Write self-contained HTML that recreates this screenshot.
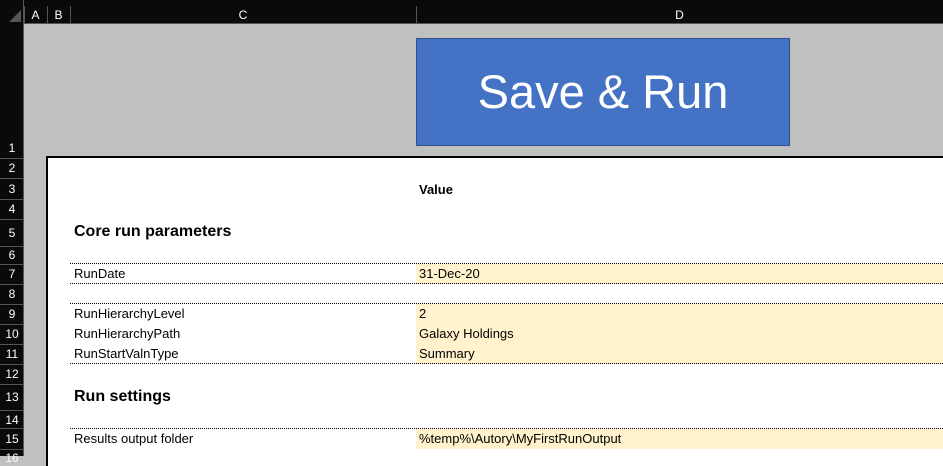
<!DOCTYPE html>
<html><head><style>
body{margin:0;width:943px;height:456px;overflow:hidden;background:#c0c0c0;font-family:"Liberation Sans",sans-serif;position:relative}
div{position:absolute;box-sizing:border-box}
.h{color:#fff;font-size:12px;text-align:center}
.s{left:0;width:24px;height:1px;background:#555}
.t{font-size:13px;color:#000;white-space:nowrap}
.dot{left:70px;width:873px;height:0;border-top:1px dotted #000}
.y{left:416px;width:527px;background:#fff2cc}
</style></head><body>
<div style="left:0;top:0;width:943px;height:24px;background:#0a0a0a;border-bottom:1px solid #555"></div>
<div style="left:0;top:0;width:24px;height:456px;background:#0a0a0a;border-right:1px solid #555"></div>
<div style="left:9px;top:10px;width:0;height:0;border-left:12px solid transparent;border-bottom:12px solid #555"></div>
<div style="left:24px;top:6px;width:1px;height:18px;background:#555"></div>
<div style="left:47px;top:6px;width:1px;height:18px;background:#555"></div>
<div style="left:70px;top:6px;width:1px;height:18px;background:#555"></div>
<div style="left:416px;top:6px;width:1px;height:18px;background:#555"></div>
<div class="h" style="left:24px;top:8px;width:23px">A</div>
<div class="h" style="left:47px;top:8px;width:23px">B</div>
<div class="h" style="left:70px;top:8px;width:346px">C</div>
<div class="h" style="left:416px;top:8px;width:527px">D</div>
<div class="s" style="top:158px"></div>
<div class="s" style="top:178px"></div>
<div class="s" style="top:199px"></div>
<div class="s" style="top:219px"></div>
<div class="s" style="top:246px"></div>
<div class="s" style="top:264px"></div>
<div class="s" style="top:284px"></div>
<div class="s" style="top:304px"></div>
<div class="s" style="top:324px"></div>
<div class="s" style="top:344px"></div>
<div class="s" style="top:364px"></div>
<div class="s" style="top:384px"></div>
<div class="s" style="top:410px"></div>
<div class="s" style="top:428px"></div>
<div class="s" style="top:449px"></div>
<div class="h" style="left:0;top:141px;width:24px">1</div>
<div class="h" style="left:0;top:161px;width:24px">2</div>
<div class="h" style="left:0;top:182px;width:24px">3</div>
<div class="h" style="left:0;top:202px;width:24px">4</div>
<div class="h" style="left:0;top:226px;width:24px">5</div>
<div class="h" style="left:0;top:248px;width:24px">6</div>
<div class="h" style="left:0;top:267px;width:24px">7</div>
<div class="h" style="left:0;top:287px;width:24px">8</div>
<div class="h" style="left:0;top:307px;width:24px">9</div>
<div class="h" style="left:0;top:327px;width:24px">10</div>
<div class="h" style="left:0;top:347px;width:24px">11</div>
<div class="h" style="left:0;top:367px;width:24px">12</div>
<div class="h" style="left:0;top:390px;width:24px">13</div>
<div class="h" style="left:0;top:413px;width:24px">14</div>
<div class="h" style="left:0;top:432px;width:24px">15</div>
<div class="h" style="left:0;top:451px;width:24px">16</div>
<div style="left:416px;top:38px;width:374px;height:108px;background:#4472c4;border:1px solid #2f528f;color:#fff;font-size:47px;text-align:center;line-height:106px">Save &amp; Run</div>
<div style="left:46px;top:156px;width:900px;height:310px;background:#fff;border-left:2px solid #000;border-top:2px solid #000"></div>
<div class="y" style="top:264px;height:20px"></div>
<div class="y" style="top:304px;height:60px"></div>
<div class="y" style="top:429px;height:20px"></div>
<div class="dot" style="top:263px"></div>
<div class="dot" style="top:283px"></div>
<div class="dot" style="top:303px"></div>
<div class="dot" style="top:363px"></div>
<div class="dot" style="top:428px"></div>
<div class="t" style="left:419px;top:182px;font-weight:bold">Value</div>
<div class="t" style="left:74px;top:223px;font-size:16px;font-weight:bold">Core run parameters</div>
<div class="t" style="left:74px;top:266px">RunDate</div>
<div class="t" style="left:419px;top:266px">31-Dec-20</div>
<div class="t" style="left:74px;top:306px">RunHierarchyLevel</div>
<div class="t" style="left:419px;top:306px">2</div>
<div class="t" style="left:74px;top:326px">RunHierarchyPath</div>
<div class="t" style="left:419px;top:326px">Galaxy Holdings</div>
<div class="t" style="left:74px;top:346px">RunStartValnType</div>
<div class="t" style="left:419px;top:346px">Summary</div>
<div class="t" style="left:74px;top:388px;font-size:16px;font-weight:bold">Run settings</div>
<div class="t" style="left:74px;top:431px">Results output folder</div>
<div class="t" style="left:419px;top:431px">%temp%\Autory\MyFirstRunOutput</div>
</body></html>
